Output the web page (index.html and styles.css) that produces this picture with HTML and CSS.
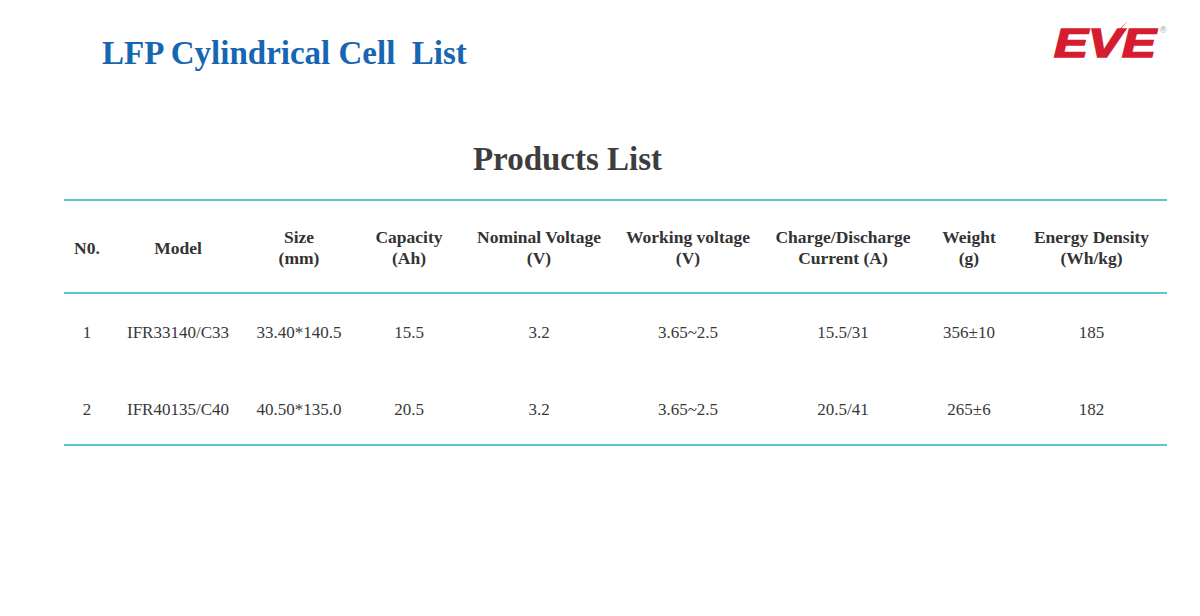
FILE: index.html
```html
<!DOCTYPE html>
<html lang="en">
<head>
<meta charset="utf-8">
<title>LFP Cylindrical Cell List</title>
<link rel="stylesheet" href="styles.css">
</head>
<body>
<div class="page">
  <header class="top">
    <h1 class="title">LFP Cylindrical Cell&nbsp; List</h1>
    <div class="logo">
      <svg width="125" height="50" viewBox="0 0 125 50" aria-label="EVE">
        <text class="logo-text" x="6" y="39" textLength="102" lengthAdjust="spacingAndGlyphs">EVE</text>
        <polygon class="logo-bolt" points="80,3 67,15.5 72,14.5 63,26 75.5,12.5 70.5,13.5"/>
        <text class="logo-reg" x="112" y="15">®</text>
      </svg>
    </div>
  </header>

  <h2 class="heading">Products List</h2>

  <table class="products">
    <colgroup>
      <col class="c-no"><col class="c-model"><col class="c-size"><col class="c-cap">
      <col class="c-nom"><col class="c-work"><col class="c-cur"><col class="c-wt"><col class="c-ed">
    </colgroup>
    <thead>
      <tr>
        <th>N0.</th>
        <th>Model</th>
        <th>Size<br>(mm)</th>
        <th>Capacity<br>(Ah)</th>
        <th>Nominal Voltage<br>(V)</th>
        <th>Working voltage<br>(V)</th>
        <th>Charge/Discharge<br>Current (A)</th>
        <th>Weight<br>(g)</th>
        <th>Energy Density<br>(Wh/kg)</th>
      </tr>
    </thead>
    <tbody>
      <tr>
        <td>1</td>
        <td>IFR33140/C33</td>
        <td>33.40*140.5</td>
        <td>15.5</td>
        <td>3.2</td>
        <td>3.65~2.5</td>
        <td>15.5/31</td>
        <td>356±10</td>
        <td>185</td>
      </tr>
      <tr class="last">
        <td>2</td>
        <td>IFR40135/C40</td>
        <td>40.50*135.0</td>
        <td>20.5</td>
        <td>3.2</td>
        <td>3.65~2.5</td>
        <td>20.5/41</td>
        <td>265±6</td>
        <td>182</td>
      </tr>
    </tbody>
  </table>
</div>
</body>
</html>
```

FILE: styles.css
```css
html, body {
  margin: 0;
  padding: 0;
  background: #ffffff;
}

body {
  font-family: "Liberation Serif", "Times New Roman", serif;
  color: #333333;
}

.page {
  width: 1200px;
  height: 616px;
  overflow: hidden;
}

.top {
  display: flex;
  justify-content: space-between;
  align-items: flex-start;
}

.title {
  margin: 35px 0 0 102px;
  font-size: 33px;
  line-height: 36px;
  font-weight: bold;
  color: #1766b2;
}

.logo {
  margin: 18px 27px 0 0;
  line-height: 0;
}

.logo-text {
  font-family: "Liberation Sans", Arial, sans-serif;
  font-weight: bold;
  font-style: italic;
  font-size: 40px;
  fill: #d61c30;
  stroke: #d61c30;
  stroke-width: 1.6px;
  stroke-linejoin: miter;
}

.logo-bolt {
  fill: #d61c30;
}

.logo-reg {
  font-family: "Liberation Sans", Arial, sans-serif;
  font-size: 9px;
  fill: #9a9a9a;
}

.heading {
  margin: 69px 0 0 64px;
  width: 1007px;
  text-align: center;
  font-size: 33px;
  line-height: 38px;
  font-weight: bold;
  color: #3d3d3d;
}

.products {
  margin: 21px 0 0 64px;
  width: 1103px;
  table-layout: fixed;
  border-collapse: separate;
  border-spacing: 0;
}

.c-no { width: 46px; }
.c-model { width: 136px; }
.c-size { width: 106px; }
.c-cap { width: 114px; }
.c-nom { width: 146px; }
.c-work { width: 152px; }
.c-cur { width: 158px; }
.c-wt { width: 94px; }
.c-ed { width: 151px; }

.products th {
  border-top: 2px solid #5bc6d0;
  border-bottom: 2px solid #5bc6d0;
  padding: 26px 0 23px;
  font-size: 17.5px;
  line-height: 21px;
  font-weight: bold;
  color: #333333;
  text-align: center;
  vertical-align: middle;
  white-space: nowrap;
}

.products td {
  padding: 29px 0 28px;
  font-size: 17px;
  line-height: 20px;
  color: #383838;
  text-align: center;
  vertical-align: middle;
  white-space: nowrap;
}

.products tr.last td {
  padding-bottom: 24px;
  border-bottom: 2px solid #5bc6d0;
}
```
